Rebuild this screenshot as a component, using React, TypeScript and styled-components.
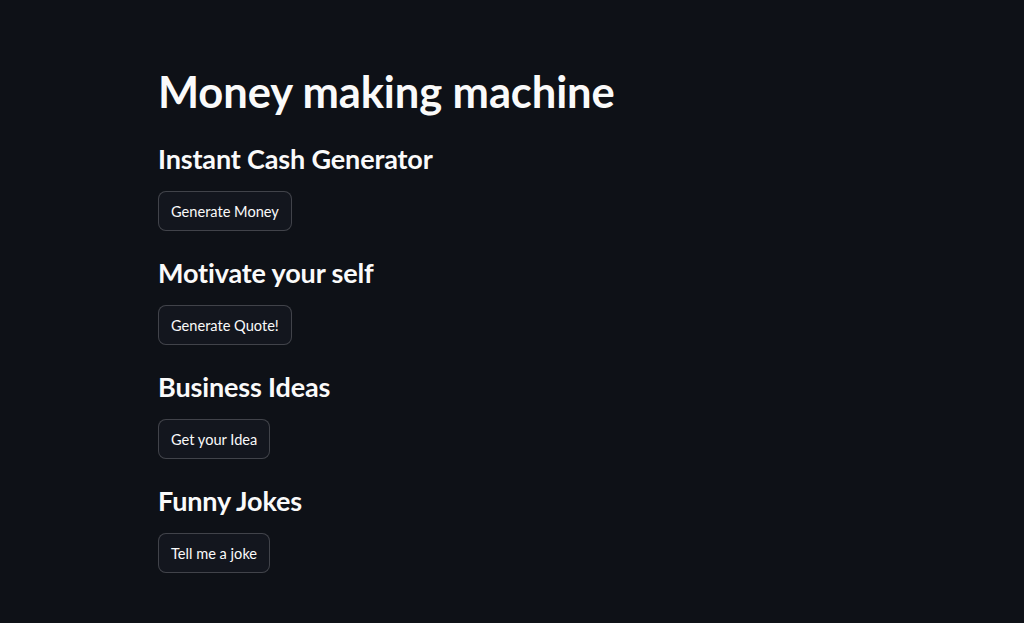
import React from "react";
import styled, { createGlobalStyle } from "styled-components";

const GlobalStyle = createGlobalStyle`
  html, body {
    margin: 0;
    padding: 0;
    background: #0e1117;
  }
  body {
    font-family: "Lato", "Noto Sans", sans-serif;
    color: #fafafa;
  }
`;

const Page = styled.main`
  min-height: 100vh;
  background: #0e1117;
  padding: 63px 0 40px 158px;
  box-sizing: border-box;
`;

const Title = styled.h1`
  font-size: 43.5px;
  font-weight: 700;
  line-height: 56px;
  margin: 0 0 22px;
  letter-spacing: -0.1px;
`;

const Section = styled.section`
  display: flex;
  flex-direction: column;
  align-items: flex-start;
  gap: 14px;
  margin-bottom: 24px;
`;

const Heading = styled.h3`
  font-size: 27px;
  font-weight: 700;
  line-height: 36px;
  margin: 0;
  letter-spacing: -0.15px;
`;

const Button = styled.button`
  font-family: inherit;
  font-size: 14.6px;
  color: #fafafa;
  background: #13161e;
  border: 1px solid rgba(250, 250, 250, 0.2);
  border-radius: 8px;
  height: 40px;
  padding: 0 12px;
  cursor: pointer;
  &:hover {
    border-color: #ff4b4b;
    color: #ff4b4b;
  }
`;

const sections = [
  { title: "Instant Cash Generator", label: "Generate Money" },
  { title: "Motivate your self", label: "Generate Quote!" },
  { title: "Business Ideas", label: "Get your Idea" },
  { title: "Funny Jokes", label: "Tell me a joke" },
];

export default function App() {
  return (
    <>
      <GlobalStyle />
      <Page>
        <Title>Money making machine</Title>
        {sections.map((s) => (
          <Section key={s.title}>
            <Heading>{s.title}</Heading>
            <Button>{s.label}</Button>
          </Section>
        ))}
      </Page>
    </>
  );
}
